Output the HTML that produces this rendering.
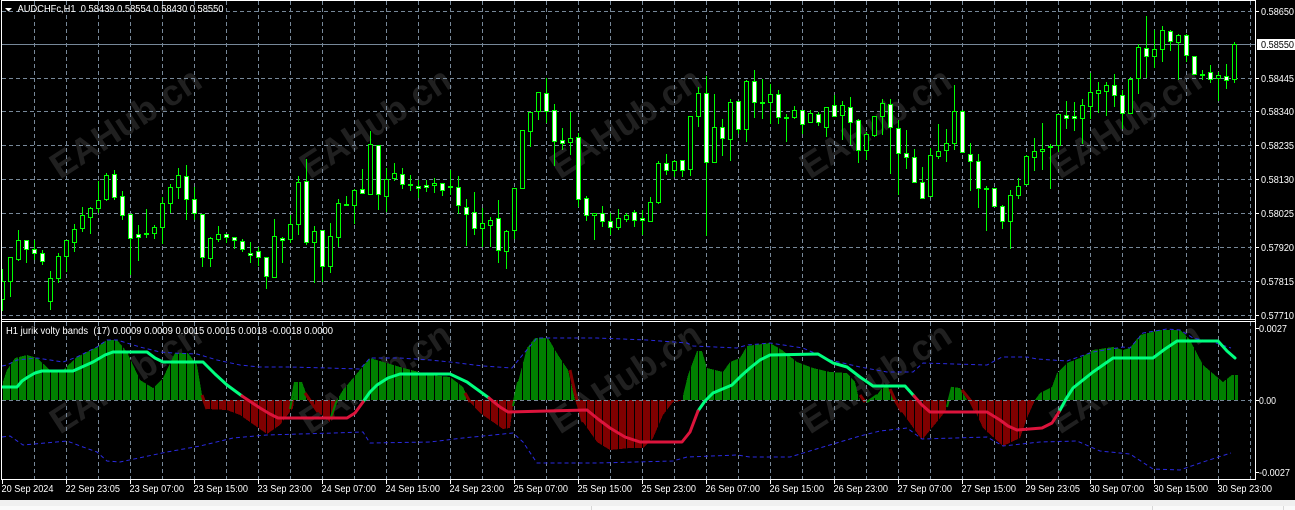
<!DOCTYPE html>
<html><head><meta charset="utf-8"><style>
html,body{margin:0;padding:0;background:#000;width:1295px;height:510px;overflow:hidden}
svg{display:block}
text{font-family:"Liberation Sans",sans-serif;font-size:10px;fill:#fff}
</style></head><body>
<svg width="1295" height="510" viewBox="0 0 1295 510" xmlns="http://www.w3.org/2000/svg">
<defs>
<pattern id="pg" x="2" y="0" width="8" height="10" patternUnits="userSpaceOnUse"><rect width="8" height="10" fill="#008000"/><rect width="1" height="10" fill="#000"/></pattern>
<pattern id="pr" x="2" y="0" width="8" height="10" patternUnits="userSpaceOnUse"><rect width="8" height="10" fill="#800000"/><rect width="1" height="10" fill="#000"/></pattern>
</defs>
<rect width="1295" height="510" fill="#000"/>

<!-- watermarks -->
<g>
<g transform="rotate(-33 125 122)"><text x="125" y="135" text-anchor="middle" style="font-size:36px;font-weight:bold;fill:#202020">EAHub.cn</text></g>
<g transform="rotate(-33 375 122)"><text x="375" y="135" text-anchor="middle" style="font-size:36px;font-weight:bold;fill:#202020">EAHub.cn</text></g>
<g transform="rotate(-33 625 122)"><text x="625" y="135" text-anchor="middle" style="font-size:36px;font-weight:bold;fill:#202020">EAHub.cn</text></g>
<g transform="rotate(-33 875 122)"><text x="875" y="135" text-anchor="middle" style="font-size:36px;font-weight:bold;fill:#202020">EAHub.cn</text></g>
<g transform="rotate(-33 1125 122)"><text x="1125" y="135" text-anchor="middle" style="font-size:36px;font-weight:bold;fill:#202020">EAHub.cn</text></g>
<g transform="rotate(-33 125 377)"><text x="125" y="390" text-anchor="middle" style="font-size:36px;font-weight:bold;fill:#202020">EAHub.cn</text></g>
<g transform="rotate(-33 375 377)"><text x="375" y="390" text-anchor="middle" style="font-size:36px;font-weight:bold;fill:#202020">EAHub.cn</text></g>
<g transform="rotate(-33 625 377)"><text x="625" y="390" text-anchor="middle" style="font-size:36px;font-weight:bold;fill:#202020">EAHub.cn</text></g>
<g transform="rotate(-33 875 377)"><text x="875" y="390" text-anchor="middle" style="font-size:36px;font-weight:bold;fill:#202020">EAHub.cn</text></g>
<g transform="rotate(-33 1125 377)"><text x="1125" y="390" text-anchor="middle" style="font-size:36px;font-weight:bold;fill:#202020">EAHub.cn</text></g>
</g>

<!-- grid -->
<g shape-rendering="crispEdges" stroke="#778899" stroke-width="1" fill="none">
<path stroke-dasharray="4 3" d="M2 11.5H1255M2 78.5H1255M2 111.5H1255M2 145.5H1255M2 179.5H1255M2 213.5H1255M2 247.5H1255M2 281.5H1255M2 315.5H1255"/>
<path stroke-dasharray="4 3" d="M34.5 1V319M66.5 1V319M98.5 1V319M130.5 1V319M162.5 1V319M194.5 1V319M226.5 1V319M258.5 1V319M290.5 1V319M322.5 1V319M354.5 1V319M386.5 1V319M418.5 1V319M450.5 1V319M482.5 1V319M514.5 1V319M546.5 1V319M578.5 1V319M610.5 1V319M642.5 1V319M674.5 1V319M706.5 1V319M738.5 1V319M770.5 1V319M802.5 1V319M834.5 1V319M866.5 1V319M898.5 1V319M930.5 1V319M962.5 1V319M994.5 1V319M1026.5 1V319M1058.5 1V319M1090.5 1V319M1122.5 1V319M1154.5 1V319M1186.5 1V319M1218.5 1V319M1250.5 1V319"/>
<path stroke-dasharray="4 3" d="M34.5 322V479M66.5 322V479M98.5 322V479M130.5 322V479M162.5 322V479M194.5 322V479M226.5 322V479M258.5 322V479M290.5 322V479M322.5 322V479M354.5 322V479M386.5 322V479M418.5 322V479M450.5 322V479M482.5 322V479M514.5 322V479M546.5 322V479M578.5 322V479M610.5 322V479M642.5 322V479M674.5 322V479M706.5 322V479M738.5 322V479M770.5 322V479M802.5 322V479M834.5 322V479M866.5 322V479M898.5 322V479M930.5 322V479M962.5 322V479M994.5 322V479M1026.5 322V479M1058.5 322V479M1090.5 322V479M1122.5 322V479M1154.5 322V479M1186.5 322V479M1218.5 322V479M1250.5 322V479"/>
<path d="M2 44.5H1255"/>
</g>

<!-- wicks -->
<path shape-rendering="crispEdges" fill="none" stroke="#00ff00" stroke-width="1" d="M2.5 269V311M10.5 257V297M18.5 230V261M26.5 240V263M34.5 240V260M42.5 250V265M50.5 271V310M58.5 253V283M66.5 240V272M74.5 224V252M82.5 207V232M90.5 207V234M98.5 181V213M106.5 173V201M114.5 170V200M122.5 191V220M130.5 214V275M138.5 225V261M146.5 209V238M154.5 225V239M162.5 197V244M170.5 184V213M178.5 168V199M186.5 165V220M194.5 187V220M202.5 214V267M210.5 237V267M218.5 226V242M226.5 234V243M234.5 237V249M242.5 239V252M250.5 242V263M258.5 247V266M266.5 257V289M274.5 219V278M282.5 237V263M290.5 215V243M298.5 176V235M306.5 159V245M314.5 226V283M322.5 230V282M330.5 223V273M338.5 199V247M346.5 196V205M354.5 189V224M362.5 169V194M370.5 131V195M378.5 145V210M386.5 168V212M394.5 163V181M402.5 168V189M410.5 175V191M418.5 180V198M426.5 180V192M434.5 178V193M442.5 183V196M450.5 170V195M458.5 176V214M466.5 199V246M474.5 192V235M482.5 208V247M490.5 217V247M498.5 200V263M506.5 230V269M514.5 188V239M522.5 130V189M530.5 112V147M538.5 92V120M546.5 78V123M554.5 104V166M562.5 128V150M570.5 112V155M578.5 133V207M586.5 196V221M594.5 213V240M602.5 206V227M610.5 213V235M618.5 209V230M626.5 213V222M634.5 210V227M642.5 210V235M650.5 197V221M658.5 161V204M666.5 154V175M674.5 160V177M682.5 160V177M690.5 116V176M698.5 87V127M706.5 76V236M714.5 94V162M722.5 119V156M730.5 99V161M738.5 101V134M746.5 80V142M754.5 70V118M762.5 79V119M770.5 84V124M778.5 90V124M786.5 114V142M794.5 106V119M802.5 110V134M810.5 110V123M818.5 112V126M826.5 107V137M834.5 95V117M842.5 101V140M850.5 97V145M858.5 119V163M866.5 132V160M874.5 116V137M882.5 99V135M890.5 99V174M898.5 120V195M906.5 130V169M914.5 149V182M922.5 167V199M930.5 148V197M938.5 124V159M946.5 129V162M954.5 85V150M962.5 110V152M970.5 143V191M978.5 154V208M986.5 186V231M994.5 188V207M1002.5 205V229M1010.5 190V249M1018.5 178V199M1026.5 155V185M1034.5 138V171M1042.5 123V170M1050.5 144V189M1058.5 114V152M1066.5 101V129M1074.5 102V131M1082.5 99V144M1090.5 73V119M1098.5 82V113M1106.5 82V116M1114.5 74V107M1122.5 90V129M1130.5 77V114M1138.5 44V94M1146.5 16V78M1154.5 30V68M1162.5 26V62M1170.5 30V51M1178.5 34V80M1186.5 34V62M1194.5 56V74M1202.5 70V80M1210.5 65V83M1218.5 72V101M1226.5 64V89M1234.5 42V83"/>
<!-- hollow (bull) bodies -->
<path shape-rendering="crispEdges" fill="#000" stroke="#00ff00" stroke-width="1" d="M.5 281.5h4V299.5h-4zM8.5 257.5h4V281.5h-4zM16.5 240.5h4V259.5h-4zM48.5 278.5h4V301.5h-4zM56.5 256.5h4V278.5h-4zM64.5 240.5h4V256.5h-4zM72.5 229.5h4V242.5h-4zM80.5 215.5h4V228.5h-4zM88.5 208.5h4V217.5h-4zM96.5 200.5h4V208.5h-4zM104.5 175.5h4V199.5h-4zM144.5 233.5h4V234.5h-4zM152.5 227.5h4V233.5h-4zM160.5 203.5h4V227.5h-4zM168.5 187.5h4V203.5h-4zM176.5 175.5h4V187.5h-4zM208.5 238.5h4V258.5h-4zM216.5 234.5h4V239.5h-4zM272.5 236.5h4V277.5h-4zM288.5 224.5h4V239.5h-4zM296.5 182.5h4V224.5h-4zM312.5 231.5h4V242.5h-4zM328.5 236.5h4V266.5h-4zM336.5 203.5h4V237.5h-4zM344.5 204.5h4V205.5h-4zM352.5 190.5h4V205.5h-4zM368.5 144.5h4V194.5h-4zM384.5 179.5h4V196.5h-4zM392.5 173.5h4V178.5h-4zM408.5 184.5h4V185.5h-4zM432.5 183.5h4V185.5h-4zM448.5 186.5h4V187.5h-4zM480.5 223.5h4V228.5h-4zM488.5 220.5h4V225.5h-4zM504.5 231.5h4V251.5h-4zM512.5 188.5h4V230.5h-4zM520.5 130.5h4V188.5h-4zM528.5 112.5h4V131.5h-4zM536.5 92.5h4V111.5h-4zM568.5 138.5h4V142.5h-4zM592.5 213.5h4V215.5h-4zM616.5 218.5h4V227.5h-4zM624.5 215.5h4V219.5h-4zM648.5 202.5h4V221.5h-4zM656.5 163.5h4V202.5h-4zM672.5 161.5h4V170.5h-4zM688.5 116.5h4V169.5h-4zM696.5 93.5h4V116.5h-4zM712.5 127.5h4V162.5h-4zM728.5 102.5h4V139.5h-4zM744.5 81.5h4V129.5h-4zM760.5 102.5h4V103.5h-4zM768.5 94.5h4V102.5h-4zM784.5 117.5h4V118.5h-4zM792.5 110.5h4V117.5h-4zM808.5 113.5h4V122.5h-4zM824.5 107.5h4V127.5h-4zM840.5 105.5h4V115.5h-4zM864.5 134.5h4V150.5h-4zM872.5 116.5h4V135.5h-4zM880.5 103.5h4V116.5h-4zM928.5 155.5h4V196.5h-4zM936.5 151.5h4V156.5h-4zM944.5 143.5h4V150.5h-4zM952.5 111.5h4V143.5h-4zM984.5 188.5h4V189.5h-4zM1008.5 195.5h4V221.5h-4zM1016.5 186.5h4V195.5h-4zM1024.5 156.5h4V184.5h-4zM1032.5 151.5h4V157.5h-4zM1040.5 149.5h4V151.5h-4zM1048.5 146.5h4V147.5h-4zM1056.5 114.5h4V145.5h-4zM1080.5 105.5h4V118.5h-4zM1088.5 92.5h4V106.5h-4zM1096.5 90.5h4V93.5h-4zM1104.5 85.5h4V91.5h-4zM1128.5 79.5h4V113.5h-4zM1136.5 47.5h4V78.5h-4zM1152.5 49.5h4V56.5h-4zM1160.5 30.5h4V49.5h-4zM1176.5 35.5h4V42.5h-4zM1200.5 74.5h4V75.5h-4zM1216.5 75.5h4V78.5h-4zM1232.5 44.5h4V79.5h-4z"/>
<!-- filled (bear) bodies -->
<path shape-rendering="crispEdges" fill="#fff" stroke="#00ff00" stroke-width="1" d="M24.5 240.5h4V249.5h-4zM32.5 249.5h4V253.5h-4zM40.5 253.5h4V261.5h-4zM112.5 174.5h4V197.5h-4zM120.5 196.5h4V215.5h-4zM128.5 214.5h4V238.5h-4zM136.5 234.5h4V237.5h-4zM184.5 176.5h4V199.5h-4zM192.5 199.5h4V213.5h-4zM200.5 214.5h4V257.5h-4zM224.5 234.5h4V237.5h-4zM232.5 237.5h4V240.5h-4zM240.5 241.5h4V249.5h-4zM248.5 253.5h4V255.5h-4zM256.5 251.5h4V257.5h-4zM264.5 257.5h4V276.5h-4zM280.5 238.5h4V240.5h-4zM304.5 181.5h4V242.5h-4zM320.5 230.5h4V266.5h-4zM360.5 189.5h4V193.5h-4zM376.5 145.5h4V194.5h-4zM400.5 174.5h4V184.5h-4zM416.5 186.5h4V188.5h-4zM424.5 185.5h4V187.5h-4zM440.5 183.5h4V190.5h-4zM456.5 187.5h4V205.5h-4zM464.5 207.5h4V214.5h-4zM472.5 212.5h4V228.5h-4zM496.5 218.5h4V250.5h-4zM544.5 93.5h4V111.5h-4zM552.5 110.5h4V141.5h-4zM560.5 140.5h4V143.5h-4zM576.5 137.5h4V199.5h-4zM584.5 198.5h4V215.5h-4zM600.5 213.5h4V221.5h-4zM608.5 221.5h4V227.5h-4zM632.5 212.5h4V220.5h-4zM640.5 218.5h4V220.5h-4zM664.5 163.5h4V170.5h-4zM680.5 160.5h4V170.5h-4zM704.5 93.5h4V162.5h-4zM720.5 127.5h4V138.5h-4zM736.5 101.5h4V129.5h-4zM752.5 81.5h4V102.5h-4zM776.5 94.5h4V117.5h-4zM800.5 110.5h4V124.5h-4zM816.5 114.5h4V122.5h-4zM832.5 105.5h4V116.5h-4zM848.5 107.5h4V122.5h-4zM856.5 120.5h4V150.5h-4zM888.5 104.5h4V127.5h-4zM896.5 128.5h4V153.5h-4zM904.5 153.5h4V157.5h-4zM912.5 157.5h4V182.5h-4zM920.5 182.5h4V198.5h-4zM960.5 111.5h4V152.5h-4zM968.5 154.5h4V161.5h-4zM976.5 161.5h4V188.5h-4zM992.5 188.5h4V206.5h-4zM1000.5 206.5h4V221.5h-4zM1064.5 115.5h4V118.5h-4zM1072.5 116.5h4V118.5h-4zM1112.5 85.5h4V95.5h-4zM1120.5 95.5h4V113.5h-4zM1144.5 48.5h4V56.5h-4zM1168.5 31.5h4V41.5h-4zM1184.5 35.5h4V55.5h-4zM1192.5 56.5h4V74.5h-4zM1208.5 72.5h4V79.5h-4zM1224.5 76.5h4V80.5h-4z"/>

<!-- histogram areas -->
<g shape-rendering="crispEdges">
<polygon fill="url(#pg)" points="2,400 2,385 7,370 15,358 27,355 37,358 50,370 63,370 77,357 97,347 107,340 117,340 127,352 140,380 153,388 163,378 175,353 188,353 197,365 202,395 204,400"/>
<polygon fill="url(#pr)" points="205,400 207,409 227,410 240,415 267,434 280,425 293,408 294,400"/>
<polygon fill="url(#pg)" points="293,400 295,382 302,382 306,393 308,400"/>
<polygon fill="url(#pr)" points="312,400 318,412 330,422 333,418 337,400"/>
<polygon fill="url(#pg)" points="337,400 343,390 370,358 400,367 430,375 450,377 463,387 468,398 469,400"/>
<polygon fill="url(#pr)" points="469,400 470,402 480,413 493,422 503,429 510,428 513,405 515,400"/>
<polygon fill="url(#pg)" points="515,400 518,382 527,348 535,338 548,338 558,355 568,370 575,400"/>
<polygon fill="url(#pr)" points="575,400 583,422 597,442 610,450 630,448 643,448 653,438 663,415 673,402 687,400"/>
<polygon fill="url(#pg)" points="682,400 688,375 697,351 702,351 707,368 723,372 730,362 740,358 747,346 770,343 782,350 797,362 813,368 830,372 847,373 855,382 858,395 860,400"/>
<polygon fill="url(#pg)" points="870,400 877,395 882,388 888,387 895,400"/>
<polygon fill="url(#pr)" points="895,400 902,412 922,440 945,412 950,400"/>
<polygon fill="url(#pg)" points="950,400 952,387 960,388 967,400"/>
<polygon fill="url(#pr)" points="970,400 983,428 1003,446 1020,438 1027,418 1035,400"/>
<polygon fill="url(#pg)" points="1035,400 1040,393 1052,387 1057,373 1067,363 1080,358 1093,350 1113,347 1123,350 1130,348 1140,335 1160,330 1180,330 1190,340 1203,365 1223,382 1232,375 1238,375 1238,400"/>
</g>
<g fill="none" stroke="#800000" stroke-width="3">
<path d="M202 395L207 409M305 393L318 412M465 393L470 402M570 370L575 393L583 422M860 395L865 402M890 389L895 400L902 412M962 390L970 400L975 410"/>
</g>
<g fill="none" stroke="#008000" stroke-width="2">
<path d="M290 409L295 382M331 417L337 400M513 406L518 382M867 402L877 395M947 407L952 387"/>
</g>
<!-- zero line -->
<path shape-rendering="crispEdges" stroke="#778899" stroke-width="1" stroke-dasharray="4 3" fill="none" d="M2 400.5H1255"/>

<!-- bands -->
<g fill="none" stroke="#2a2ae0" stroke-width="1" stroke-dasharray="4 3">
<polyline points="2,366 7,365 17,360 37,358 63,362 77,357 97,347 107,340 117,340 140,347 160,352 173,353 197,354 217,360 240,365 260,367 290,367 327,368 360,369 370,358 400,358 430,360 450,362 483,366 512,368 520,358 537,338 597,338 647,340 687,343 693,346 737,348 747,345 770,343 803,348 830,360 860,367 887,372 913,372 923,363 987,365 1002,357 1027,357 1037,359 1067,361 1093,352 1123,347 1130,348 1143,333 1167,329 1180,330 1193,338 1213,342 1231,348"/>
<polyline points="2,437 10,436 23,445 67,441 83,447 97,452 107,461 120,462 167,452 200,446 233,438 267,435 333,433 363,432 370,443 430,442 463,438 483,436 513,433 523,442 537,463 597,463 673,461 687,457 737,455 750,457 790,457 823,447 860,436 880,431 907,428 922,439 987,437 1003,446 1040,442 1077,441 1100,451 1130,454 1153,469 1180,470 1203,462 1231,453"/>
</g>

<!-- jurik line -->
<g fill="none" stroke-width="3" stroke-linejoin="round" stroke-linecap="round">
<path stroke="#00ff7f" d="M2 387L17 387L22 381L28 377L35 373L42 371L73 371L93 362L105 355L113 352L147 352L155 358L163 362L203 362L215 374L227 385L242 396M363 402L370 392L377 385L388 378L400 374L450 374L467 382L489 398M698 411L705 401L713 393L732 385L741 376L750 368L760 360L770 355L818 354L833 363L847 367L860 377L873 386L905 386L914 396M1059 412L1066 399L1073 388L1093 372L1113 358L1153 358L1165 349L1177 341L1218 341L1227 351L1235 358"/>
<path stroke="#dc143c" d="M242 396L260 408L270 414L278 418L347 418L355 413L363 402M489 398L500 407L508 412L587 410L598 419L610 428L625 437L640 442L682 442L690 432L698 411M914 396L922 405L930 412L987 412L1000 420L1008 426L1017 430L1042 428L1052 423L1059 412"/>
</g>

<!-- frame -->
<g shape-rendering="crispEdges" fill="#fff">
<rect x="0" y="0" width="1" height="480" fill="#000"/>
<rect x="1" y="0" width="1255" height="1"/>
<rect x="1" y="0" width="1" height="480"/>
<rect x="1255" y="0" width="1" height="480"/>
<rect x="1" y="319" width="1255" height="1"/>
<rect x="1" y="321" width="1255" height="1"/>
<rect x="1" y="479" width="1255" height="1"/>
<path stroke="#fff" fill="none" d="M1256 11.5h3M1256 78.5h3M1256 111.5h3M1256 145.5h3M1256 179.5h3M1256 213.5h3M1256 247.5h3M1256 281.5h3M1256 315.5h3M1256 328.5h3M1256 400.5h3M1256 472.5h3M2.5 480v4M66.5 480v4M130.5 480v4M194.5 480v4M258.5 480v4M322.5 480v4M386.5 480v4M450.5 480v4M514.5 480v4M578.5 480v4M642.5 480v4M706.5 480v4M770.5 480v4M834.5 480v4M898.5 480v4M962.5 480v4M1026.5 480v4M1090.5 480v4M1154.5 480v4M1218.5 480v4"/>
<rect x="1257" y="39" width="38" height="11"/>
</g>

<!-- header -->
<polygon points="5,8 12,8 8.5,11.5" fill="#fff"/>
<text x="17.5" y="12" textLength="206" lengthAdjust="spacingAndGlyphs" xml:space="preserve">AUDCHFc,H1  0.58439 0.58554 0.58430 0.58550</text>
<text x="6" y="334" textLength="327" lengthAdjust="spacingAndGlyphs" xml:space="preserve">H1 jurik volty bands  (17) 0.0009 0.0009 0.0015 0.0015 0.0018 -0.0018 0.0000</text>

<!-- price axis -->
<g>
<text x="1261" y="15" textLength="33" lengthAdjust="spacingAndGlyphs">0.58650</text>
<text x="1261" y="48" textLength="33" lengthAdjust="spacingAndGlyphs" style="fill:#000">0.58550</text>
<text x="1261" y="82" textLength="33" lengthAdjust="spacingAndGlyphs">0.58445</text>
<text x="1261" y="115" textLength="33" lengthAdjust="spacingAndGlyphs">0.58340</text>
<text x="1261" y="149" textLength="33" lengthAdjust="spacingAndGlyphs">0.58235</text>
<text x="1261" y="183" textLength="33" lengthAdjust="spacingAndGlyphs">0.58130</text>
<text x="1261" y="217" textLength="33" lengthAdjust="spacingAndGlyphs">0.58025</text>
<text x="1261" y="251" textLength="33" lengthAdjust="spacingAndGlyphs">0.57920</text>
<text x="1261" y="285" textLength="33" lengthAdjust="spacingAndGlyphs">0.57815</text>
<text x="1261" y="319" textLength="33" lengthAdjust="spacingAndGlyphs">0.57710</text>
<text x="1259" y="332" textLength="28" lengthAdjust="spacingAndGlyphs">0.0027</text>
<text x="1259" y="404" textLength="17" lengthAdjust="spacingAndGlyphs">0.00</text>
<text x="1259" y="476" textLength="31" lengthAdjust="spacingAndGlyphs">-0.0027</text>
</g>

<!-- time axis -->
<g>
<text x="1.5" y="492" textLength="52" lengthAdjust="spacingAndGlyphs">20 Sep 2024</text>
<text x="65.5" y="492" textLength="54.5" lengthAdjust="spacingAndGlyphs">22 Sep 23:05</text>
<text x="129.5" y="492" textLength="54.5" lengthAdjust="spacingAndGlyphs">23 Sep 07:00</text>
<text x="193.5" y="492" textLength="54.5" lengthAdjust="spacingAndGlyphs">23 Sep 15:00</text>
<text x="257.5" y="492" textLength="54.5" lengthAdjust="spacingAndGlyphs">23 Sep 23:00</text>
<text x="321.5" y="492" textLength="54.5" lengthAdjust="spacingAndGlyphs">24 Sep 07:00</text>
<text x="385.5" y="492" textLength="54.5" lengthAdjust="spacingAndGlyphs">24 Sep 15:00</text>
<text x="449.5" y="492" textLength="54.5" lengthAdjust="spacingAndGlyphs">24 Sep 23:00</text>
<text x="513.5" y="492" textLength="54.5" lengthAdjust="spacingAndGlyphs">25 Sep 07:00</text>
<text x="577.5" y="492" textLength="54.5" lengthAdjust="spacingAndGlyphs">25 Sep 15:00</text>
<text x="641.5" y="492" textLength="54.5" lengthAdjust="spacingAndGlyphs">25 Sep 23:00</text>
<text x="705.5" y="492" textLength="54.5" lengthAdjust="spacingAndGlyphs">26 Sep 07:00</text>
<text x="769.5" y="492" textLength="54.5" lengthAdjust="spacingAndGlyphs">26 Sep 15:00</text>
<text x="833.5" y="492" textLength="54.5" lengthAdjust="spacingAndGlyphs">26 Sep 23:00</text>
<text x="897.5" y="492" textLength="54.5" lengthAdjust="spacingAndGlyphs">27 Sep 07:00</text>
<text x="961.5" y="492" textLength="54.5" lengthAdjust="spacingAndGlyphs">27 Sep 15:00</text>
<text x="1025.5" y="492" textLength="54.5" lengthAdjust="spacingAndGlyphs">29 Sep 23:05</text>
<text x="1089.5" y="492" textLength="54.5" lengthAdjust="spacingAndGlyphs">30 Sep 07:00</text>
<text x="1153.5" y="492" textLength="54.5" lengthAdjust="spacingAndGlyphs">30 Sep 15:00</text>
<text x="1217.5" y="492" textLength="54.5" lengthAdjust="spacingAndGlyphs">30 Sep 23:00</text>
</g>

<!-- bottom strip -->
<g shape-rendering="crispEdges">
<rect x="0" y="500" width="1295" height="10" fill="#f0f0f0"/>
<rect x="0" y="506" width="1295" height="4" fill="#fafafa"/>
<rect x="591" y="506" width="1" height="4" fill="#d8d8d8"/>
<rect x="1152" y="506" width="1" height="4" fill="#d8d8d8"/>
<rect x="1283" y="506" width="1" height="4" fill="#d8d8d8"/>
</g>
</svg>
</body></html>
